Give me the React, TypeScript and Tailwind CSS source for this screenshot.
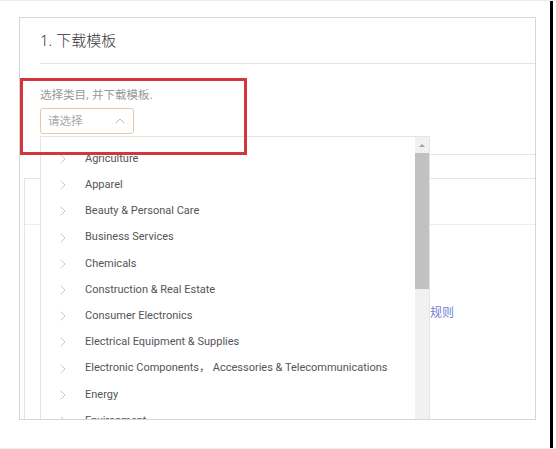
import { ChevronRight, ChevronUp } from "lucide-react";

const categories = [
  "Agriculture",
  "Apparel",
  "Beauty & Personal Care",
  "Business Services",
  "Chemicals",
  "Construction & Real Estate",
  "Consumer Electronics",
  "Electrical Equipment & Supplies",
  "Electronic Components， Accessories & Telecommunications",
  "Energy",
  "Environment",
];

function CategoryDropdown() {
  return (
    <div className="absolute top-[118px] left-[20px] flex h-[300px] w-[390px] border border-[#e5e5e5] bg-white">
      <ul className="flex-1 pt-[9px]">
        {categories.map((name) => (
          <li key={name} className="flex h-[26.2px] items-center">
            <ChevronRight className="ml-[14px] h-[16px] w-[16px] text-[#aaa]" strokeWidth={1} />
            <span
              className="ml-[14px] text-[11px] text-[#555]"
              style={{ fontFamily: 'Roboto, "Noto Sans CJK SC", sans-serif' }}
            >
              {name}
            </span>
          </li>
        ))}
      </ul>
      <div className="flex w-[14px] flex-col bg-[#f1f1f1]">
        <div className="flex h-[16px] items-center justify-center">
          <div className="h-0 w-0 border-x-[3px] border-b-[3px] border-x-transparent border-b-[#a3a3a3]" />
        </div>
        <div className="h-[136px] w-full bg-[#c1c1c1]" />
      </div>
    </div>
  );
}

export default function App() {
  return (
    <div
      className="relative flex h-[449px] w-[556px] border-t border-b border-[#ececec] bg-white pr-[3px]"
      style={{ fontFamily: '"Noto Sans", "Noto Sans CJK SC", sans-serif' }}
    >
      <div className="flex-1 pt-[16px] pl-[19px]">
        <div className="relative h-[403px] w-[517px] overflow-hidden border border-[#d6d6d6]">
          <div className="ml-[20px] flex h-[46px] items-center border-b border-[#e5e5e5]">
            <h2 className="text-[15px] font-light text-[#333]">1. 下载模板</h2>
          </div>
          <div className="h-[91px] border-b border-[#e5e5e5] pt-[24px] pl-[20px]">
            <p className="text-[11.5px] leading-[14px] text-[#999]">选择类目, 并下载模板.</p>
            <div className="mt-[6px] flex h-[26px] w-[94px] items-center justify-between rounded-[3px] border border-[#e6c7a6] pr-[5px] pl-[7px]">
              <span className="text-[11.5px] text-[#aaa]">请选择</span>
              <ChevronUp className="h-[16px] w-[16px] text-[#999]" strokeWidth={1} />
            </div>
          </div>
          <div className="mt-[23px] ml-[4px] h-[250px] border-t border-l border-[#e5e5e5]">
            <div className="h-[46px] border-b border-[#ededed]" />
            <div className="pt-[79px] pl-[405px] text-[12px] text-[#6e7fd3]">规则</div>
          </div>
          <CategoryDropdown />
        </div>
      </div>
      <div className="absolute top-[77px] left-[20px] h-[77px] w-[227px] border-[3px] border-[#d2373d]" />
      <div className="w-[3px] bg-black" />
    </div>
  );
}
